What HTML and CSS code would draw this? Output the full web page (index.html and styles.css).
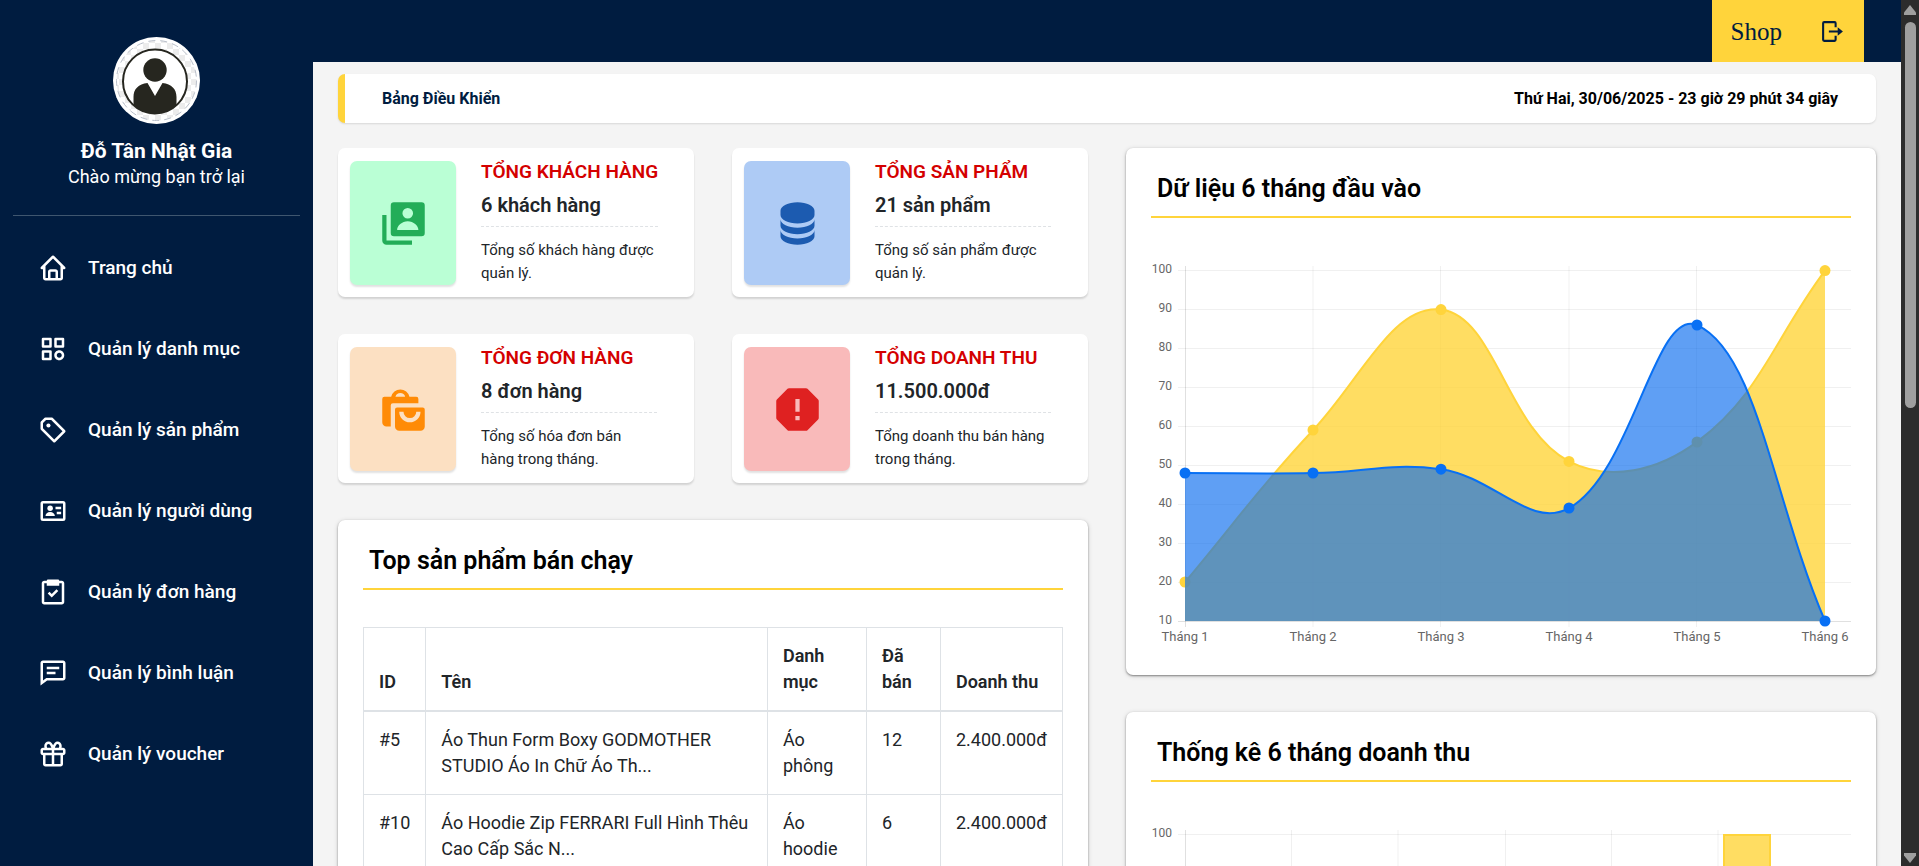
FILE: index.html
```html
<!DOCTYPE html>
<html lang="vi">
<head>
<meta charset="utf-8">
<meta name="viewport" content="width=device-width, initial-scale=1">
<title>Bảng Điều Khiển</title>
<link rel="stylesheet" href="styles.css">
</head>
<body class="app">
  <aside class="sidebar">
    <div class="profile">
      <svg class="avatar" viewBox="0 0 87 87" aria-hidden="true">
        <defs>
          <pattern id="checks" width="12" height="12" patternUnits="userSpaceOnUse">
            <rect width="12" height="12" fill="#fff"/>
            <rect width="6" height="6" fill="#ececec"/>
            <rect x="6" y="6" width="6" height="6" fill="#ececec"/>
          </pattern>
          <clipPath id="bust"><circle cx="42" cy="44.500" r="32"/></clipPath>
        </defs>
        <circle cx="43.500" cy="43.500" r="43.500" fill="#fff"/>
        <circle cx="43.500" cy="43.500" r="40" fill="url(#checks)" stroke="#b9bfca" stroke-width="1" stroke-dasharray="7 5"/>
        <circle cx="42" cy="44.500" r="32" fill="#fff" stroke="#26261f" stroke-width="2"/>
        <circle cx="42" cy="33" r="11.700" fill="#26261f"/>
        <path clip-path="url(#bust)" fill="#26261f" d="M20.500 70V60c0-8 5-13 14-14l7.500 13 7.500-13c9 1 14 6 14 14v10L50 78H34z"/>
      </svg>
      <strong class="profile-name">Đỗ Tân Nhật Gia</strong>
      <span class="profile-greeting">Chào mừng bạn trở lại</span>
    </div>
    <nav class="nav">
      <a class="nav-link" href="#home">
        <svg class="nav-icon" viewBox="0 0 24 24" aria-hidden="true"><path d="M3 13h1v7c0 1.103.897 2 2 2h12c1.103 0 2-.897 2-2v-7h1a1 1 0 0 0 .707-1.707l-9-9a.999.999 0 0 0-1.414 0l-9 9A1 1 0 0 0 3 13zm7 7v-5h4v5h-4zm2-15.586 6 6V15l.001 5H16v-5c0-1.103-.897-2-2-2h-4c-1.103 0-2 .897-2 2v5H6v-9.586l6-6z"/></svg>
        Trang chủ
      </a>
      <a class="nav-link" href="#categories">
        <svg class="nav-icon" viewBox="0 0 24 24" aria-hidden="true"><path d="M10 3H4a1 1 0 0 0-1 1v6a1 1 0 0 0 1 1h6a1 1 0 0 0 1-1V4a1 1 0 0 0-1-1zM9 9H5V5h4v4zm11-6h-6a1 1 0 0 0-1 1v6a1 1 0 0 0 1 1h6a1 1 0 0 0 1-1V4a1 1 0 0 0-1-1zm-1 6h-4V5h4v4zm-9 4H4a1 1 0 0 0-1 1v6a1 1 0 0 0 1 1h6a1 1 0 0 0 1-1v-6a1 1 0 0 0-1-1zm-1 6H5v-4h4v4zm8-6c-2.206 0-4 1.794-4 4s1.794 4 4 4 4-1.794 4-4-1.794-4-4-4zm0 6c-1.103 0-2-.897-2-2s.897-2 2-2 2 .897 2 2-.897 2-2 2z"/></svg>
        Quản lý danh mục
      </a>
      <a class="nav-link" href="#products">
        <svg class="nav-icon" viewBox="0 0 24 24" aria-hidden="true"><path d="M11.707 2.293A.997.997 0 0 0 11 2H6a.997.997 0 0 0-.707.293l-3 3A.996.996 0 0 0 2 6v5c0 .266.105.52.293.707l10 10a.997.997 0 0 0 1.414 0l8-8a.999.999 0 0 0 0-1.414l-10-10zM13 19.586l-9-9V6.414L6.414 4h4.172l9 9L13 19.586z"/><circle cx="8.353" cy="8.353" r="1.647"/></svg>
        Quản lý sản phẩm
      </a>
      <a class="nav-link" href="#users">
        <svg class="nav-icon" viewBox="0 0 24 24" aria-hidden="true"><path fill-rule="evenodd" d="M4 4h16a2 2 0 0 1 2 2v12a2 2 0 0 1-2 2H4a2 2 0 0 1-2-2V6a2 2 0 0 1 2-2zm0 2v12h16V6z"/><circle cx="9.700" cy="9.800" r="2.200"/><path d="M6 16c0-2 1.500-3.300 3.700-3.300s3.800 1.300 3.800 3.300zM14 8.500h4.500v2H14zM15 12.500h3.500v2H15z"/></svg>
        Quản lý người dùng
      </a>
      <a class="nav-link" href="#orders">
        <svg class="nav-icon" viewBox="0 0 24 24" aria-hidden="true"><path d="M5 22h14c1.103 0 2-.897 2-2V5c0-1.103-.897-2-2-2h-2a1 1 0 0 0-1-1H8a1 1 0 0 0-1 1H5c-1.103 0-2 .897-2 2v15c0 1.103.897 2 2 2zM5 5h2v2h10V5h2v15H5V5z"/><path d="m11 13.586-1.793-1.793-1.414 1.414L11 16.414l5.207-5.207-1.414-1.414z"/></svg>
        Quản lý đơn hàng
      </a>
      <a class="nav-link" href="#comments">
        <svg class="nav-icon" viewBox="0 0 24 24" aria-hidden="true"><path d="M20 2H4c-1.103 0-2 .897-2 2v18l5.333-4H20c1.103 0 2-.897 2-2V4c0-1.103-.897-2-2-2zm0 14H6.667L4 18V4h16v12z"/><path d="M7 7h10v2H7zm0 4h7v2H7z"/></svg>
        Quản lý bình luận
      </a>
      <a class="nav-link" href="#vouchers">
        <svg class="nav-icon" viewBox="0 0 24 24" aria-hidden="true"><path d="M20 7h-1.209A4.92 4.92 0 0 0 19 5.500C19 3.570 17.430 2 15.500 2c-1.622 0-2.705 1.482-3.404 3.085C11.407 3.570 10.269 2 8.500 2 6.570 2 5 3.570 5 5.500c0 .596.079 1.089.209 1.500H4c-1.103 0-2 .897-2 2v2c0 1.103.897 2 2 2v7c0 1.103.897 2 2 2h12c1.103 0 2-.897 2-2v-7c1.103 0 2-.897 2-2V9c0-1.103-.897-2-2-2zm-4.500-3c.827 0 1.500.673 1.500 1.500C17 7 16.374 7 16 7h-2.478c.511-1.576 1.253-3 1.978-3zM7 5.500C7 4.673 7.673 4 8.500 4c.888 0 1.714 1.525 2.198 3H8c-.374 0-1 0-1-1.500zM4 9h7v2H4V9zm2 11v-7h5v7H6zm12 0h-5v-7h5v7zm-5-9V9.085L13.017 9H20l.001 2H13z"/></svg>
        Quản lý voucher
      </a>
    </nav>
  </aside>

  <div class="page">
    <header class="topbar">
      <div class="topbar-actions">
        <a class="shop-link" href="#shop">Shop</a>
        <button class="logout" type="button" aria-label="Đăng xuất">
          <svg class="logout-icon" viewBox="0 0 24 24" aria-hidden="true"><path fill="none" stroke="currentColor" stroke-width="2" d="M15 8V4a1 1 0 0 0-1-1H4a1 1 0 0 0-1 1v16a1 1 0 0 0 1 1h10a1 1 0 0 0 1-1v-4"/><path fill="currentColor" d="M8.500 11H17V8l5 4-5 4v-3H8.500z"/></svg>
        </button>
      </div>
    </header>

    <main class="content">
      <div class="title-bar">
        <h1 class="page-title">Bảng Điều Khiển</h1>
        <time class="clock">Thứ Hai, 30/06/2025 - 23 giờ 29 phút 34 giây</time>
      </div>

      <div class="columns">
        <div class="column">
          <div class="stats">
            <section class="stat">
              <div class="stat-badge badge-green">
                <svg class="stat-icon" viewBox="0 0 24 24" aria-hidden="true"><path fill-rule="evenodd" d="M7.500 2h13A1.500 1.500 0 0 1 22 3.500v13a1.500 1.500 0 0 1-1.500 1.500h-13A1.500 1.500 0 0 1 6 16.500v-13A1.500 1.500 0 0 1 7.500 2zM14 4.700a2.500 2.500 0 1 0 0 5 2.500 2.500 0 0 0 0-5zM9 15h10c0-2-2.300-4.100-5-4.100S9 13 9 15z"/><path d="M4 8H2v12a2 2 0 0 0 2 2h12v-2H4z"/></svg>
              </div>
              <div class="stat-info">
                <h2 class="stat-title">TỔNG KHÁCH HÀNG</h2>
                <p class="stat-value">6 khách hàng</p>
                <p class="stat-note">Tổng số khách hàng được quản lý.</p>
              </div>
            </section>
            <section class="stat">
              <div class="stat-badge badge-blue">
                <svg class="stat-icon" viewBox="0 0 24 24" aria-hidden="true"><path d="M20 6c0-2.168-3.663-4-8-4S4 3.832 4 6v2c0 2.168 3.663 4 8 4s8-1.832 8-4V6zm-8 13c-4.337 0-8-1.832-8-4v3c0 2.168 3.663 4 8 4s8-1.832 8-4v-3c0 2.168-3.663 4-8 4z"/><path d="M20 10c0 2.168-3.663 4-8 4s-8-1.832-8-4v3c0 2.168 3.663 4 8 4s8-1.832 8-4v-3z"/></svg>
              </div>
              <div class="stat-info">
                <h2 class="stat-title">TỔNG SẢN PHẨM</h2>
                <p class="stat-value">21 sản phẩm</p>
                <p class="stat-note">Tổng số sản phẩm được quản lý.</p>
              </div>
            </section>
            <section class="stat">
              <div class="stat-badge badge-orange">
                <svg class="stat-icon" viewBox="0 0 24 24" aria-hidden="true"><path fill-rule="evenodd" d="M3 6h3.200a4.400 4.400 0 0 1 8.600 0H18a1 1 0 0 1 1 1v2H7a1 1 0 0 0-1 1v10H4a2 2 0 0 1-2-2V7a1 1 0 0 1 1-1zm5.200 0h4.600a2.400 2.400 0 0 0-4.600 0z"/><path fill-rule="evenodd" d="M9 11h12a1 1 0 0 1 1 1v8a2 2 0 0 1-2 2H10a2 2 0 0 1-2-2v-8a1 1 0 0 1 1-1zm1 2c0 2.800 2.200 5 5 5s5-2.200 5-5h-2a3 3 0 0 1-6 0z"/></svg>
              </div>
              <div class="stat-info">
                <h2 class="stat-title">TỔNG ĐƠN HÀNG</h2>
                <p class="stat-value">8 đơn hàng</p>
                <p class="stat-note">Tổng số hóa đơn bán hàng trong tháng.</p>
              </div>
            </section>
            <section class="stat">
              <div class="stat-badge badge-red">
                <svg class="stat-icon" viewBox="0 0 24 24" aria-hidden="true"><path d="M16.707 2.293A.996.996 0 0 0 16 2H8a.996.996 0 0 0-.707.293l-5 5A.996.996 0 0 0 2 8v8c0 .266.105.520.293.707l5 5A.996.996 0 0 0 8 22h8c.266 0 .520-.105.707-.293l5-5A.996.996 0 0 0 22 16V8a.996.996 0 0 0-.293-.707l-5-5zM13 17h-2v-2h2v2zm0-4h-2V7h2v6z"/></svg>
              </div>
              <div class="stat-info">
                <h2 class="stat-title">TỔNG DOANH THU</h2>
                <p class="stat-value">11.500.000đ</p>
                <p class="stat-note">Tổng doanh thu bán hàng trong tháng.</p>
              </div>
            </section>
          </div>

          <section class="panel">
            <h2 class="panel-title">Top sản phẩm bán chạy</h2>
            <table class="products">
              <thead>
                <tr><th class="col-id">ID</th><th>Tên</th><th class="col-category">Danh mục</th><th class="col-sold">Đã bán</th><th class="col-revenue">Doanh thu</th></tr>
              </thead>
              <tbody>
                <tr><td>#5</td><td>Áo Thun Form Boxy GODMOTHER STUDIO Áo In Chữ Áo Th...</td><td>Áo phông</td><td>12</td><td>2.400.000đ</td></tr>
                <tr><td>#10</td><td>Áo Hoodie Zip FERRARI Full Hình Thêu Cao Cấp Sắc N...</td><td>Áo hoodie</td><td>6</td><td>2.400.000đ</td></tr>
              </tbody>
            </table>
          </section>
        </div>

        <div class="column">
          <section class="panel">
            <h2 class="panel-title">Dữ liệu 6 tháng đầu vào</h2>
            <svg class="chart" viewBox="0 0 700 400" role="img" aria-label="Dữ liệu 6 tháng đầu vào">
              <path class="grid" d="M27 21.500H700M27 60.500H700M27 99.500H700M27 138.500H700M27 177.500H700M27 216.500H700M27 255.500H700M27 294.500H700M27 333.500H700M162 17V378M289.500 17V378M418 17V378M545.500 17V378"/>
              <path class="axis" d="M34.500 17V378M27 372.500H700"/>
              <g class="ticks-y">
                <text x="21" y="24">100</text><text x="21" y="63">90</text><text x="21" y="102">80</text><text x="21" y="141">70</text><text x="21" y="180">60</text><text x="21" y="219">50</text><text x="21" y="258">40</text><text x="21" y="297">30</text><text x="21" y="336">20</text><text x="21" y="375">10</text>
              </g>
              <g class="ticks-x">
                <text x="34" y="392">Tháng 1</text><text x="162" y="392">Tháng 2</text><text x="290" y="392">Tháng 3</text><text x="418" y="392">Tháng 4</text><text x="546" y="392">Tháng 5</text><text x="674" y="392">Tháng 6</text>
              </g>
              <path class="area-yellow" d="M34 372V333.100C85.200 272.300 107.700 239 162 181.200C210.100 130 241.900 54.700 290 60.600C344.300 67.200 356 180.400 418 212.400C458.400 233.300 507.400 221.700 546 192.900C609.800 145.400 622.800 90.100 674 21.600V372z"/>
              <path class="line-yellow" d="M34 333.100C85.200 272.300 107.700 239 162 181.200C210.100 130 241.900 54.700 290 60.600C344.300 67.200 356 180.400 418 212.400C458.400 233.300 507.400 221.700 546 192.900C609.800 145.400 622.800 90.100 674 21.600"/>
              <g class="dots-yellow"><circle cx="34" cy="333" r="5.500"/><circle cx="162" cy="181" r="5.500"/><circle cx="290" cy="60.600" r="5.500"/><circle cx="418" cy="212.400" r="5.500"/><circle cx="546" cy="193" r="5.500"/><circle cx="674" cy="21.600" r="5.500"/></g>
              <path class="area-blue" d="M34 372V224.100C85.200 224.100 110.800 224.900 162 224.100C213.200 223.300 239.900 213.400 290 220.200C342.300 227.400 379.600 280.700 418 259.100C482 223.100 504.100 57.600 546 76.100C606.500 102.800 622.800 253.600 674 372z"/>
              <path class="line-blue" d="M34 224.100C85.200 224.100 110.800 224.900 162 224.100C213.200 223.300 239.900 213.400 290 220.200C342.300 227.400 379.600 280.700 418 259.100C482 223.100 504.100 57.600 546 76.100C606.500 102.800 622.800 253.600 674 372"/>
              <g class="dots-blue"><circle cx="34" cy="224" r="5.500"/><circle cx="162" cy="224" r="5.500"/><circle cx="290" cy="220.200" r="5.500"/><circle cx="418" cy="259" r="5.500"/><circle cx="546" cy="76" r="5.500"/><circle cx="674" cy="372" r="5.500"/></g>
            </svg>
          </section>

          <section class="panel">
            <h2 class="panel-title">Thống kê 6 tháng doanh thu</h2>
            <svg class="chart" viewBox="0 0 700 400" role="img" aria-label="Thống kê 6 tháng doanh thu">
              <path class="grid" d="M27 21.500H700M27 60.500H700M27 99.500H700M140.500 17V378M247 17V378M354.500 17V378M460.500 17V378M567 17V378"/>
              <path class="axis" d="M34.500 17V378M27 372.500H700"/>
              <g class="ticks-y"><text x="21" y="24">100</text><text x="21" y="62">90</text></g>
              <path class="area-yellow" d="M572 21H620V372H572z"/>
              <path class="line-yellow" d="M573 372V22H619V372"/>
            </svg>
          </section>
        </div>
      </div>
    </main>
  </div>

  <div class="scrollbar" aria-hidden="true">
    <svg class="scroll-arrow" viewBox="0 0 18 22"><path d="M9 5 15 12.500V15H3v-2.500z"/></svg>
    <div class="scroll-track"><div class="scroll-thumb"></div></div>
    <svg class="scroll-arrow" viewBox="0 0 18 22"><path d="M3 9h12v2.500L9 19l-6-7.500z"/></svg>
  </div>
</body>
</html>
```
FILE: styles.css
```css
* {
  box-sizing: border-box;
}

.app {
  --navy: #001c40;
  --yellow: #ffd43b;
  display: flex;
  height: 100vh;
  margin: 0;
  overflow: hidden;
  background: #f4f4f4;
  color: #212529;
  font-family: Roboto, "Noto Sans", sans-serif;
  font-size: 18px;
  line-height: 26px;
}

h1, h2, p {
  margin: 0;
}

/* Sidebar */
.sidebar {
  flex: 0 0 313px;
  padding: 37px 13px;
  background: var(--navy);
  color: #fff;
}

.profile {
  display: flex;
  flex-direction: column;
  align-items: center;
  padding-bottom: 25px;
  border-bottom: 1px solid #3f566f;
}

.avatar {
  width: 87px;
  height: 87px;
  margin-bottom: 14px;
}

.profile-name {
  font-size: 21px;
}

.nav {
  display: flex;
  flex-direction: column;
  padding: 11px 25px;
}

.nav-link {
  display: flex;
  align-items: center;
  gap: 20px;
  height: 81px;
  color: #fff;
  font-size: 19px;
  font-weight: 500;
  text-decoration: none;
}

.nav-icon {
  width: 30px;
  height: 30px;
  fill: currentColor;
}

/* Top bar */
.page {
  display: flex;
  flex: 1;
  flex-direction: column;
  min-width: 0;
}

.topbar {
  display: flex;
  flex: 0 0 62px;
  justify-content: flex-end;
  padding-right: 37px;
  background: var(--navy);
}

.topbar-actions {
  display: flex;
  align-items: center;
  gap: 38px;
  padding: 0 19px;
  background: var(--yellow);
}

.shop-link {
  padding-top: 2px;
  color: var(--navy);
  font: 25px/32px "Liberation Serif", serif;
  text-decoration: none;
}

.logout {
  display: flex;
  padding: 0;
  border: 0;
  background: none;
  color: var(--navy);
}

.logout-icon {
  width: 25px;
  height: 25px;
}

/* Content */
.content {
  flex: 1;
  min-height: 0;
  padding: 12px 25px;
  overflow: hidden;
}

.title-bar {
  display: flex;
  align-items: center;
  justify-content: space-between;
  height: 49px;
  margin-bottom: 25px;
  padding: 0 38px 0 37px;
  border-left: 7px solid var(--yellow);
  border-radius: 7px;
  background: #fff;
  box-shadow: 0 1px 2px rgba(0, 0, 0, .12);
  font-size: 16px;
}

.page-title {
  color: var(--navy);
  font-size: 16px;
  font-weight: 700;
}

.clock {
  color: #000;
  font-weight: 700;
}

.columns,
.stats {
  display: grid;
  grid-template-columns: repeat(2, minmax(0, 1fr));
  align-items: start;
  gap: 37px 38px;
}

.column {
  display: grid;
  gap: 37px;
}

.stat {
  display: flex;
  gap: 25px;
  min-height: 149px;
  padding: 13px 12px 12px;
  border-radius: 7px;
  background: #fff;
  box-shadow: 0 2px 2px rgba(0, 0, 0, .14);
}

.stat-badge {
  display: flex;
  flex: 0 0 106px;
  align-items: center;
  justify-content: center;
  border-radius: 7px;
  box-shadow: 0 2px 2px rgba(0, 0, 0, .12);
}

.stat-icon {
  width: 51px;
  height: 51px;
  fill: currentColor;
}

.badge-green { background: #baffd5; color: #23ad58; }
.badge-blue { background: #aecbf5; color: #1c5bb0; }
.badge-orange { background: #fce0c2; color: #ff8b06; }
.badge-red { background: #f9baba; color: #df2121; }

.stat-info {
  flex: 1;
  padding-right: 25px;
}

.stat-title {
  color: #d40000;
  font-size: 19px;
  font-weight: 600;
  line-height: 22px;
  white-space: nowrap;
}

.stat-value {
  margin: 8px 0 12px;
  padding-bottom: 7px;
  border-bottom: 1px dashed #dfe2e5;
  font-size: 20px;
  font-weight: 600;
  line-height: 28px;
}

.stat-note {
  font-size: 15px;
  line-height: 23px;
}

/* Panels */
.panel {
  padding: 20px 25px 26px;
  border-radius: 7px;
  background: #fff;
  box-shadow: 0 1px 2px rgba(0, 0, 0, .4), 0 1px 5px rgba(0, 0, 0, .16);
}

.panel-title {
  margin-bottom: 31px;
  padding: 1px 6px 7px;
  border-bottom: 2px solid var(--yellow);
  color: #000;
  font-size: 25px;
  font-weight: 600;
  line-height: 40px;
}

.products {
  width: 100%;
  margin-top: 37px;
  border-collapse: collapse;
}

.products th,
.products td {
  padding: 15px;
  border: 1px solid #dee2e6;
  text-align: left;
  vertical-align: top;
}

.products th {
  border-bottom-width: 2px;
  font-weight: 600;
  vertical-align: bottom;
}

.col-id { width: 61px; }
.col-category { width: 99px; }
.col-sold { width: 74px; }
.col-revenue { width: 121px; }

/* Charts */
.chart {
  display: block;
  width: 100%;
  font-family: Roboto, sans-serif;
  font-size: 12px;
}

.grid,
.axis {
  fill: none;
  stroke: rgba(0, 0, 0, .06);
}

.axis {
  stroke: rgba(0, 0, 0, .12);
}

.ticks-y,
.ticks-x {
  fill: #666;
  text-anchor: end;
}

.ticks-x {
  font-size: 13px;
  text-anchor: middle;
}

.area-yellow { fill: rgba(255, 212, 59, .8); }
.area-blue { fill: rgba(5, 105, 238, .64); }
.line-yellow,
.line-blue {
  fill: none;
  stroke: var(--yellow);
  stroke-width: 2;
}
.line-blue { stroke: #0870f4; }
.dots-yellow { fill: var(--yellow); }
.dots-blue { fill: #0870f4; }

/* Window scrollbar */
.scrollbar {
  display: flex;
  flex: 0 0 18px;
  flex-direction: column;
  background: #2c2c2c;
}

.scroll-arrow {
  width: 18px;
  height: 22px;
  fill: #9f9f9f;
}

.scroll-track {
  flex: 1;
  padding: 0 3px 0 4px;
}

.scroll-thumb {
  height: 47%;
  border-radius: 6px;
  background: #9f9f9f;
}
```
